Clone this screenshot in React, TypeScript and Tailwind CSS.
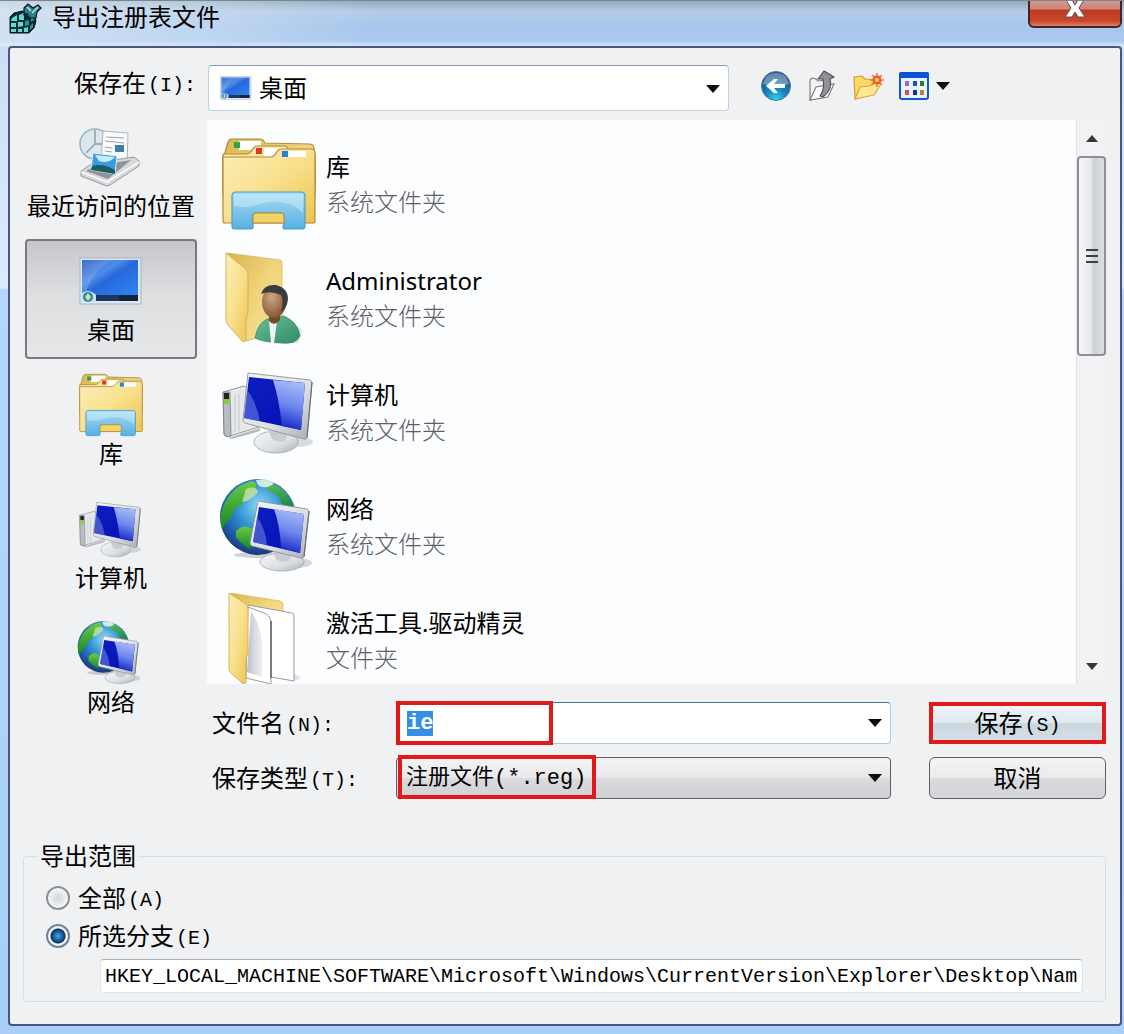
import { useEffect, useRef, useState, type ReactNode } from "react";

const CJK = "font-['Noto_Sans','Noto_Sans_CJK_SC',sans-serif]";
const MONO = "font-['Liberation_Mono','Noto_Sans_CJK_SC',monospace]";

/* Gradients shared by all the icons */
function Gradients() {
  return (
    <svg className="absolute size-0" aria-hidden="true">
      <defs>
        <linearGradient id="g-manila" x1="0" y1="0" x2="1" y2="1">
          <stop offset="0" stopColor="#fbeeb8" />
          <stop offset="0.5" stopColor="#f8e08c" />
          <stop offset="1" stopColor="#ecc44f" />
        </linearGradient>
        <linearGradient id="g-manila-back" x1="0" y1="0" x2="1" y2="1">
          <stop offset="0" stopColor="#d9b44c" />
          <stop offset="0.5" stopColor="#f0d47c" />
          <stop offset="1" stopColor="#f7e39c" />
        </linearGradient>
        <linearGradient id="g-stand" x1="0" y1="0" x2="0" y2="1">
          <stop offset="0" stopColor="#a5def4" />
          <stop offset="0.55" stopColor="#7cc3ea" />
          <stop offset="1" stopColor="#55b0e6" />
        </linearGradient>
        <linearGradient id="g-screen" x1="0" y1="0" x2="1" y2="1">
          <stop offset="0" stopColor="#0d1fc0" />
          <stop offset="1" stopColor="#0410b4" />
        </linearGradient>
        <linearGradient id="g-glare" x1="0.6" y1="0" x2="0.4" y2="1">
          <stop offset="0" stopColor="#a9bdf8" />
          <stop offset="0.5" stopColor="#6d87ec" />
          <stop offset="1" stopColor="#1222c4" />
        </linearGradient>
        <linearGradient id="g-metal" x1="0" y1="0" x2="1" y2="1">
          <stop offset="0" stopColor="#f6f7f9" />
          <stop offset="0.6" stopColor="#dcdfe2" />
          <stop offset="1" stopColor="#a9adb4" />
        </linearGradient>
        <linearGradient id="g-desk" x1="0" y1="0" x2="1" y2="1">
          <stop offset="0" stopColor="#1f57c4" />
          <stop offset="0.35" stopColor="#4f8ee8" />
          <stop offset="0.5" stopColor="#2768dc" />
          <stop offset="1" stopColor="#2f86f2" />
        </linearGradient>
        <radialGradient id="g-globe" cx="0.52" cy="0.35" r="0.65">
          <stop offset="0" stopColor="#8fdcf4" />
          <stop offset="0.45" stopColor="#3292d4" />
          <stop offset="1" stopColor="#16387f" />
        </radialGradient>
        <linearGradient id="g-land" x1="0" y1="0" x2="0" y2="1">
          <stop offset="0" stopColor="#6cc84a" />
          <stop offset="1" stopColor="#138a22" />
        </linearGradient>
        <radialGradient id="g-face" cx="0.4" cy="0.35" r="0.7">
          <stop offset="0" stopColor="#cfa683" />
          <stop offset="1" stopColor="#80522f" />
        </radialGradient>
        <linearGradient id="g-shirt" x1="0" y1="0" x2="1" y2="1">
          <stop offset="0" stopColor="#6dbd9a" />
          <stop offset="1" stopColor="#2f8d66" />
        </linearGradient>
        <linearGradient id="g-page" x1="0" y1="0" x2="1" y2="0">
          <stop offset="0" stopColor="#b9bcc4" />
          <stop offset="0.5" stopColor="#d9dce2" />
          <stop offset="1" stopColor="#eceef2" />
        </linearGradient>
        <radialGradient id="g-back" cx="0.5" cy="0.95" r="0.8">
          <stop offset="0" stopColor="#2ed3f0" />
          <stop offset="0.45" stopColor="#1a86bf" />
          <stop offset="1" stopColor="#1b4f88" />
        </radialGradient>
      </defs>
    </svg>
  );
}

function LibraryIcon({ className }: { className: string }) {
  return (
    <svg viewBox="0 0 94 94" className={className} aria-hidden="true">
      <g stroke="#b08a3c" strokeWidth="1.2" strokeLinejoin="round">
        <path d="M1 22 L6 5 Q7 2 10 2 H38 Q41 2 43 6 L88 7 Q91 7 92 11 L93 24 V60 H1Z" fill="url(#g-manila-back)" />
        <rect x="17" y="4" width="22" height="9" fill="#fff" stroke="none" />
        <path d="M1 17 H24 Q28 17 30 13 Q32 9 36 9 H64 L68 14 L93 17 V50 H1Z" fill="url(#g-manila)" />
        <rect x="42" y="11" width="22" height="9" fill="#fff" stroke="none" />
        <path d="M1 20 H48 Q52 20 54 16 Q56 12 60 12 H89 Q93 12 93 16 V84 Q93 86 91 86 H3 Q1 86 1 84Z" fill="url(#g-manila)" />
      </g>
      <rect x="12" y="5" width="6" height="6" fill="#2fa548" />
      <rect x="34" y="11" width="6" height="6" fill="#d93a20" />
      <rect x="66" y="14" width="18" height="6" fill="#fff" />
      <rect x="60" y="14" width="6" height="6" fill="#2184d0" />
      <path d="M10 59 Q10 55 14 55 H79 Q83 55 83 59 V89 Q83 92 80 92 H62 Q60 90 62 87 V79 Q62 76 59 76 H34 Q31 76 31 79 V90 Q31 92 28 92 H13 Q10 92 10 89Z" fill="url(#g-stand)" stroke="#4d9ecb" strokeWidth="1.2" />
      <path d="M12 57 H81 V76 Q64 60 38 67 Q22 72 12 69Z" fill="#fff" opacity="0.3" />
      <path d="M31 86 V79 Q31 76 34 76 H59 Q62 76 62 79 V86Z" fill="#f3d368" stroke="#b48b32" strokeWidth="1" />
    </svg>
  );
}

function UserFolderIcon({ className }: { className: string }) {
  return (
    <svg viewBox="0 0 94 94" className={className} aria-hidden="true">
      <path d="M66 72 Q82 76 80 82 L76 92 H50Z" fill="#9aa0a8" opacity="0.25" />
      <path d="M5 2 L58 9 Q60 9 60 12 V80 L24 90Z" fill="url(#g-manila-back)" stroke="#dcb95c" strokeWidth="0.8" />
      <path d="M4 2 L24 18 Q26 20 26 24 V62 Q24 66 24 70 V88 Q24 92 20 90 L6 74 Q4 72 4 68Z" fill="url(#g-manila)" stroke="#d4ae4e" strokeWidth="0.9" />
      <path d="M33 87 Q36 70 48 67 L62 65 Q76 71 78 85 Q74 94 58 92 Q40 91 33 87Z" fill="url(#g-shirt)" stroke="#2b7d5c" strokeWidth="0.6" />
      <path d="M47 70 L49 92 H52 L55 70Z" fill="#eef6f2" />
      <path d="M47 60 H58 V69 Q52 76 47 70Z" fill="#76492a" />
      <ellipse cx="52" cy="51" rx="12" ry="16" fill="url(#g-face)" />
      <path d="M39 43 Q42 33 54 34 Q66 37 66 48 Q65 58 59 61 Q62 50 59 44 Q48 39 39 43Z" fill="#3b3b3d" />
    </svg>
  );
}

function ComputerIcon({ className }: { className: string }) {
  return (
    <svg viewBox="0 0 94 94" className={className} aria-hidden="true">
      <ellipse cx="76" cy="77" rx="15" ry="5" fill="#8b8f96" opacity="0.3" />
      <path d="M1 27 L22 21 L36 30 L37 62 L8 71 Q2 73 2 68Z" fill="#e6e8ea" stroke="#8b8f95" strokeWidth="0.9" />
      <path d="M1 27 L8 27 L9 71 Q2 73 2 68Z" fill="#b9bcc0" stroke="#6e7277" strokeWidth="0.7" />
      <path d="M13 30 V67 M17 29 V66" stroke="#c4c7cb" strokeWidth="1" />
      <rect x="2" y="28" width="5" height="6" fill="#1c2220" />
      <rect x="2" y="34" width="5" height="5" fill="#7fd13a" />
      <path d="M6 73 L38 63 V66 L10 74Z" fill="#b7babf" />
      <ellipse cx="54" cy="77" rx="22" ry="11" fill="url(#g-metal)" stroke="#a1a5ab" strokeWidth="0.8" />
      <path d="M46 65 L66 69 L63 76 Q55 78 50 74Z" fill="#c9ccd1" />
      <path d="M26 8 L88 15 Q90 16 90 18 L85 72 Q84 75 82 74 L23 58 Q21 57 21 55Z" fill="url(#g-metal)" stroke="#8d9299" strokeWidth="0.9" />
      <path d="M27 12 L83 18 L79 65 L22 53Z" fill="url(#g-screen)" />
      <path d="M51 15 L83 18 L79 65 L60 61 Q57 34 51 15Z" fill="url(#g-glare)" />
      <path d="M25 25 Q34 36 38 56 L22 53Z" fill="#5a6fdc" opacity="0.7" />
      <path d="M90 17 L85 73" stroke="#6c7077" strokeWidth="1.2" />
    </svg>
  );
}

function NetworkIcon({ className }: { className: string }) {
  return (
    <svg viewBox="0 0 94 94" className={className} overflow="visible" aria-hidden="true">
      <ellipse cx="36" cy="76" rx="24" ry="3" fill="#7b8087" opacity="0.35" />
      <circle cx="36" cy="38" r="38" fill="url(#g-globe)" />
      <g fill="url(#g-land)">
        <path d="M3 24 Q12 6 30 2 Q38 5 31 12 L22 18 Q24 25 14 29 Q10 36 6 42 Q2 46 0 50 Q-4 36 3 24Z" />
        <path d="M14 52 Q22 44 30 50 Q32 60 28 70 Q20 66 14 58Z" />
        <path d="M38 1 Q52 2 62 12 Q70 20 71 28 L60 25 Q58 17 50 14 Q42 10 38 1Z" opacity="0.8" />
      </g>
      <path d="M24 10 Q34 6 36 13 Q28 22 20 23Z" fill="#d8eaa4" opacity="0.7" />
      <path d="M34 1 Q45 -1 52 4 Q48 9 40 8 Q35 7 34 1Z" fill="#eefaff" opacity="0.8" />
      <ellipse cx="75" cy="84" rx="15" ry="5" fill="#8b8f96" opacity="0.35" />
      <ellipse cx="60" cy="83" rx="22" ry="9" fill="url(#g-metal)" stroke="#a1a5ab" strokeWidth="0.8" />
      <path d="M50 70 L70 75 L67 82 Q58 84 54 80Z" fill="#c9ccd1" />
      <path d="M36 22 L85 30 Q87 31 87 33 L82 77 Q81 80 79 79 L30 67 Q28 66 28 64Z" fill="url(#g-metal)" stroke="#8d9299" strokeWidth="0.9" />
      <path d="M37 28 L82 35 L78 74 L31 63Z" fill="url(#g-screen)" />
      <path d="M52 30 L82 35 L78 74 L59 69 Q58 46 52 30Z" fill="url(#g-glare)" />
      <path d="M35 38 Q43 48 45 66 L31 63Z" fill="#5a6fdc" opacity="0.7" />
      <path d="M87 32 L82 78" stroke="#6c7077" strokeWidth="1.2" />
    </svg>
  );
}

function DocumentsFolderIcon({ className }: { className: string }) {
  return (
    <svg viewBox="0 0 94 94" className={className} aria-hidden="true">
      <path d="M72 80 L79 85 L72 88Z" fill="#9aa0a8" opacity="0.3" />
      <path d="M8 0 L58 8 Q61 9 61 12 V30 L26 30Z" fill="url(#g-manila-back)" stroke="#dcb95c" strokeWidth="0.8" />
      <path d="M26 12 L70 20 Q72 20 72 23 V88 L49 84 L26 70Z" fill="#fff" stroke="#8f9097" strokeWidth="0.9" />
      <path d="M26 14 L42 20 Q49 23 49 30 V91 L24 85Z" fill="#fff" stroke="#8f9097" strokeWidth="0.9" />
      <path d="M29 18 Q40 34 40 52 V84 L25 79Z" fill="url(#g-page)" />
      <path d="M49 28 V85" stroke="#6d6470" strokeWidth="1.6" />
      <path d="M7 0 L24 11 Q26 13 26 16 V60 Q24 64 24 68 V88 Q24 92 20 90 L9 80 Q7 78 7 75Z" fill="url(#g-manila)" stroke="#d4ae4e" strokeWidth="0.9" />
    </svg>
  );
}

function DesktopIcon({ className }: { className: string }) {
  return (
    <svg viewBox="0 0 64 48" className={className} aria-hidden="true">
      <rect x="1" y="1" width="61" height="46" fill="#dfe9f5" stroke="#a7b3c4" strokeWidth="1" />
      <rect x="3" y="3" width="56" height="36" fill="url(#g-desk)" />
      <path d="M3 3 H34 Q12 14 6 39 H3Z" fill="#fff" opacity="0.14" />
      <rect x="3" y="38" width="56" height="6" fill="#1d3763" />
      <rect x="40" y="38" width="19" height="6" fill="#16243d" />
      <path d="M3 36 Q10 31 17 38 V45 H3Z" fill="#c9e0ee" />
      <circle cx="9" cy="40" r="5" fill="#2d84a8" />
      <path d="M9 36 L12 40 L9 44 L6 40Z" fill="#cfe6a0" />
    </svg>
  );
}

function DesktopPlaceIcon({ className }: { className: string }) {
  return (
    <span className={`flex items-center justify-center ${className}`}>
      <DesktopIcon className="w-full" />
    </span>
  );
}

function RecentIcon({ className }: { className: string }) {
  return (
    <svg viewBox="0 0 64 64" className={className} aria-hidden="true">
      <circle cx="16" cy="19" r="15" fill="#dde7ee" stroke="#a3b2bd" strokeWidth="1.6" />
      <path d="M16 5 V19 L7 28 M16 19 H28" stroke="#8598a6" strokeWidth="1.3" fill="none" />
      <path d="M24 6 L49 8 L48 42 L22 38Z" fill="#f9fafb" stroke="#a8adb3" strokeWidth="0.9" />
      <path d="M27 12 L45 13 M26 16 L45 18 M26 22 L33 23 M26 26 L33 27" stroke="#98a4ad" strokeWidth="1.2" />
      <rect x="36" y="20" width="9" height="7" fill="#3e7fa8" />
      <path d="M2 46 L14 38 L55 32 L60 36 V41 L31 60 Q28 62 25 60 L2 51Z" fill="#d6d8da" stroke="#8d9194" strokeWidth="0.9" />
      <path d="M7 46 L16 41 L52 35 L29 54Z" fill="#8e9498" />
      <path d="M2 47 L28 57 L60 37" stroke="#fafafa" strokeWidth="1.6" fill="none" />
      <path d="M14 28 L38 31 L36 49 L12 45Z" fill="#3b9be0" stroke="#e9f4fb" strokeWidth="0.9" />
      <path d="M16 30 L36 32 Q30 39 20 36Z" fill="#c9ecfb" />
      <path d="M13 41 Q24 38 36 45 L36 49 L12 45Z" fill="#185f63" />
    </svg>
  );
}

function RegistryIcon() {
  return (
    <svg viewBox="0 0 34 34" className="size-[34px]" aria-hidden="true">
      <path d="M2 16 L6 12 L14 10 L26 13 L28 20 L26 27 L21 32 L2 32Z" fill="#0b2e33" stroke="#06181b" strokeWidth="1" />
      <path d="M4 17 L9 14 V20 H3Z M11 14 L16 12 V19 H11Z M3 22 H8 V26 H3Z M10 21 H15 V25 L10 26Z M3 28 H8 V31 H3Z M10 28 H14 V31 H10Z M16 27 L20 26 V31 H16Z" fill="#62dbd6" />
      <path d="M17 20 L21 19 V24 L17 25Z M22 25 L25 22 V26 L22 29Z M23 17 L26 16 V19 L23 21Z" fill="#259596" />
      <path d="M16 7 L20 3 L25 7 L30 4 L33 7 L29 11 L28 17 L22 17 L16 12Z" fill="#2c7f88" stroke="#06181b" strokeWidth="1.2" />
      <path d="M19 6 L23 10 M30 6 L24 12" stroke="#a9e8e6" strokeWidth="1.6" />
      <path d="M15 13 L20 12 L21 17 L17 18Z" fill="#08262a" />
    </svg>
  );
}

function BackIcon() {
  return (
    <svg viewBox="0 0 32 32" className="size-8" aria-hidden="true">
      <circle cx="16" cy="16" r="14.5" fill="url(#g-back)" stroke="#4d7ca6" strokeWidth="1" />
      <path d="M3 14 Q5 3 16 3 Q27 3 29 14 Q16 18 3 14Z" fill="#fff" opacity="0.35" />
      <path d="M6 16 L14 9 H18 L14 14 H25 V18 H14 L18 23 H14Z" fill="#fff" />
    </svg>
  );
}

function UpIcon() {
  return (
    <svg viewBox="0 0 32 32" className="size-8" aria-hidden="true">
      <path d="M4 10 L6 8 L10 9 L12 11 L20 10 V26 L4 30Z" fill="#f2f2f2" stroke="#77797c" strokeWidth="1.1" />
      <path d="M4 30 L10 17 L28 14 L22 27Z" fill="#fdfdfd" stroke="#77797c" strokeWidth="1.1" />
      <path d="M12 9 L18 1 L28 7 L24 9 Q27 20 17 27 L14 26 Q19 19 17 9Z" fill="#8f9195" stroke="#4c4e52" strokeWidth="1.1" strokeLinejoin="round" />
    </svg>
  );
}

function NewFolderIcon() {
  return (
    <svg viewBox="0 0 32 32" className="size-8" aria-hidden="true">
      <path d="M2 7 L10 6 L13 9 L24 10 V22 L3 29Z" fill="#f9d968" stroke="#d39a2c" strokeWidth="1.1" />
      <path d="M3 29 L8 17 L18 16 L22 12 L29 14 L22 25Z" fill="#fde98f" stroke="#dba337" strokeWidth="1.1" strokeLinejoin="round" />
      <circle cx="25" cy="10" r="3.5" fill="#ffc37a" stroke="#ee5a1c" strokeWidth="2.4" />
      <path d="M25 3 V5 M25 15 V17 M18 10 H20 M30 10 H32 M20 5 L22 7 M30 5 L28 7 M20 15 L22 13 M30 15 L28 13" stroke="#f27a3a" strokeWidth="1.6" />
    </svg>
  );
}

function ViewsIcon() {
  return (
    <svg viewBox="0 0 32 32" className="size-8" aria-hidden="true">
      <rect x="2" y="3" width="28" height="26" rx="2" fill="#e6f5fd" stroke="#1458cc" strokeWidth="2" />
      <rect x="1" y="2" width="30" height="6" rx="2" fill="#0b52d4" />
      <rect x="7" y="11" width="4" height="5" fill="#a06ab8" />
      <rect x="15" y="11" width="4" height="5" fill="#1f51b4" />
      <rect x="22" y="11" width="4" height="5" fill="#2b7a2e" />
      <rect x="7" y="20" width="4" height="5" fill="#d0524a" />
      <rect x="15" y="20" width="4" height="5" fill="#1c2f8e" />
      <rect x="22" y="20" width="4" height="5" fill="#c5822e" />
    </svg>
  );
}

function Caret({ className = "" }: { className?: string }) {
  return (
    <svg viewBox="0 0 14 8" className={`h-2 w-3.5 ${className}`} aria-hidden="true">
      <path d="M0 0 H14 L7 8Z" fill="#0c0c0c" />
    </svg>
  );
}

function ScrollArrow({ className = "" }: { className?: string }) {
  return (
    <svg viewBox="0 0 12 7" className={`h-[7px] w-3 ${className}`} aria-hidden="true">
      <path d="M0 0 H12 L6 7Z" fill="#3a3536" />
    </svg>
  );
}

function Key({ children }: { children: ReactNode }) {
  return <span className="ml-0.5 align-[1px] font-['Liberation_Mono',monospace] text-[20px]">{children}</span>;
}

const places = [
  { name: "最近访问的位置", Icon: RecentIcon },
  { name: "桌面", Icon: DesktopPlaceIcon },
  { name: "库", Icon: LibraryIcon },
  { name: "计算机", Icon: ComputerIcon },
  { name: "网络", Icon: NetworkIcon },
];

const files = [
  { name: "库", kind: "系统文件夹", Icon: LibraryIcon },
  { name: "Administrator", kind: "系统文件夹", Icon: UserFolderIcon },
  { name: "计算机", kind: "系统文件夹", Icon: ComputerIcon },
  { name: "网络", kind: "系统文件夹", Icon: NetworkIcon },
  { name: "激活工具.驱动精灵", kind: "文件夹", Icon: DocumentsFolderIcon },
];

export default function App() {
  const [place, setPlace] = useState("桌面");
  const [range, setRange] = useState("branch");
  const nameRef = useRef<HTMLInputElement>(null);

  useEffect(() => {
    nameRef.current?.focus();
    nameRef.current?.select();
  }, []);

  return (
    <div
      className={`${CJK} flex min-h-screen flex-col bg-[linear-gradient(to_bottom,#c9dcf2_0,#dcebfb_288px,#b4d6fb_290px,#a9cff8_100%)] pr-0.5 pb-2 pl-2 text-[24px] text-black`}
    >
      <Gradients />
      <header className="-mr-0.5 -ml-2 flex h-[46px] items-start border-t border-[#76888f] bg-[linear-gradient(to_right,rgba(226,236,246,0.7)_0,rgba(210,226,244,0.55)_200px,rgba(170,200,236,0)_380px),linear-gradient(to_bottom,#91a8b6_0,#b3cbe8_10px,#a6c6ec_60%,#a9c9ef_88%,#d5e6f8_100%)] pr-0.5 pl-2">
        <RegistryIcon />
        <h1 className="ml-2.5 leading-8">导出注册表文件</h1>
        <button
          type="button"
          aria-label="关闭"
          className="ml-auto flex h-[27px] w-[94px] items-start justify-center rounded-b-md border-2 border-t-0 border-[#40242c] bg-[linear-gradient(to_bottom,#d5988c_0,#cf8577_8px,#bd3a22_9px,#c9472b_20px,#dd8168_100%)]"
        >
          <svg viewBox="0 0 24 18" className="h-[18px] w-6" aria-hidden="true">
            <path d="M3 -1 H9 L12 4 L15 -1 H21 L16 7 L22 16 H15 L12 11 L9 16 H2 L8 7Z" fill="#fff" stroke="#5f4a54" strokeWidth="1" />
          </svg>
        </button>
      </header>

      <main className="flex-1 rounded-sm border-2 border-[#4b567e] bg-[#f0f1f3] pt-[17px] pr-3.5 pb-5 pl-[13px]">
        <div className="flex items-start pl-0.5">
          <label htmlFor="place" className="w-[183px] pl-[49px] leading-9 whitespace-nowrap">
            保存在<Key>(I):</Key>
          </label>
          <div className="relative w-[521px]">
            <select
              id="place"
              className="h-[46px] w-full appearance-none rounded-sm border border-[#c3cfdc] border-t-[#8d9cb0] bg-white pl-[50px]"
            >
              <option>桌面</option>
            </select>
            <DesktopIcon className="pointer-events-none absolute top-[11px] left-3 h-6 w-8" />
            <Caret className="pointer-events-none absolute top-5 right-[9px]" />
          </div>
          <div className="ml-[31px] flex items-center gap-3.5 pt-[5px]">
            <button type="button" aria-label="后退"><BackIcon /></button>
            <button type="button" aria-label="向上一级"><UpIcon /></button>
            <button type="button" aria-label="新建文件夹"><NewFolderIcon /></button>
            <button type="button" aria-label="查看" className="flex items-center gap-1.5">
              <ViewsIcon />
              <Caret />
            </button>
          </div>
        </div>

        <div className="mt-1 flex gap-2.5 pl-0.5">
          <nav className="flex w-[172px] shrink-0 flex-col gap-1">
            {places.map(({ name, Icon }) => (
              <button
                key={name}
                type="button"
                aria-pressed={place === name}
                onClick={() => setPlace(name)}
                className={`flex h-[120px] flex-col items-center rounded-sm border-2 pt-2 ${
                  place === name
                    ? "border-[#77797d] bg-[linear-gradient(to_bottom,#c6c7ca_0,#dddee0_45%,#e6e7e9_100%)]"
                    : "border-transparent"
                }`}
              >
                <Icon className="size-16" />
                <span className="leading-[34px] whitespace-nowrap">{name}</span>
              </button>
            ))}
          </nav>

          <div className="flex-1 pt-[5px]">
            <div className="flex h-[564px] bg-[#fcfdff]">
              <ul className="flex-1 overflow-hidden pt-[7px] pl-[15px]">
                {files.map(({ name, kind, Icon }) => (
                  <li key={name} className="flex h-[114px] items-center gap-2.5">
                    <Icon className="size-[94px]" />
                    <div className="leading-[35px]">
                      <p>{name}</p>
                      <p className="font-light text-[#605c6a]">{kind}</p>
                    </div>
                  </li>
                ))}
              </ul>
              <div className="flex w-[30px] flex-col items-stretch border-l border-[#e3e5e8] bg-[#f1f2f4]">
                <button type="button" aria-label="向上滚动" className="flex h-9 items-center justify-center">
                  <ScrollArrow className="rotate-180" />
                </button>
                <div className="flex h-[200px] flex-col items-center justify-center gap-1 rounded-sm border-2 border-[#8e8f96] bg-[linear-gradient(to_right,#f7f7f9_0,#e9eaed_45%,#cdd0d6_60%,#dddfe4_100%)]">
                  <span className="h-0.5 w-3 bg-[#3c3d48]" />
                  <span className="h-0.5 w-3 bg-[#3c3d48]" />
                  <span className="h-0.5 w-3 bg-[#3c3d48]" />
                </div>
                <button type="button" aria-label="向下滚动" className="mt-auto flex h-9 items-center justify-center">
                  <ScrollArrow />
                </button>
              </div>
            </div>

            <div className="mt-[18px] flex">
              <div className="flex flex-1 flex-col gap-[13px]">
                <div className="flex items-center">
                  <label htmlFor="file-name" className="w-[189px] pl-[5px]">
                    文件名<Key>(N):</Key>
                  </label>
                  <div className="relative flex-1">
                    <input
                      id="file-name"
                      ref={nameRef}
                      defaultValue="ie"
                      className={`${MONO} block h-[42px] w-full rounded-sm border border-[#a9cbe6] border-t-[#4179a8] bg-white px-2.5 text-[22px] font-bold outline-none selection:bg-[#3390e6] selection:text-white`}
                    />
                    <Caret className="pointer-events-none absolute top-[17px] right-[9px]" />
                    <span className="pointer-events-none absolute -top-px left-0 h-11 w-[157px] border-4 border-[#e01a1a]" />
                  </div>
                </div>
                <div className="flex items-center">
                  <label htmlFor="file-type" className="w-[189px] pl-[5px]">
                    保存类型<Key>(T):</Key>
                  </label>
                  <div className="relative flex-1">
                    <select
                      id="file-type"
                      className={`${MONO} block h-[42px] w-full appearance-none rounded-sm border border-[#5f6064] bg-[linear-gradient(to_bottom,#f3f3f4_0,#e9e9eb_48%,#dadbdd_52%,#cfd0d3_100%)] pl-[9px] text-[22px]`}
                    >
                      <option>注册文件(*.reg)</option>
                    </select>
                    <Caret className="pointer-events-none absolute top-[17px] right-[9px]" />
                    <span className="pointer-events-none absolute -top-0.5 left-0.5 h-11 w-[198px] border-4 border-[#e01a1a]" />
                  </div>
                </div>
              </div>
              <div className="ml-[38px] flex w-[177px] flex-col gap-[13px]">
                <button
                  type="submit"
                  className="flex h-[42px] items-center justify-center border-4 border-[#e01a1a] bg-[linear-gradient(to_bottom,#eef4f8_0,#e0e9ef_48%,#cbd6de_52%,#d3dee6_100%)]"
                >
                  <span>
                    保存<Key>(S)</Key>
                  </span>
                </button>
                <button
                  type="button"
                  className="flex h-[42px] items-center justify-center rounded-md border border-[#5f6064] bg-[linear-gradient(to_bottom,#f4f4f5_0,#ebebed_48%,#d9dadc_52%,#d4d5d8_100%)]"
                >
                  取消
                </button>
              </div>
            </div>
          </div>
        </div>

        <fieldset className="mt-[41px] rounded-sm border border-[#d6dde3] px-[22px] pb-2">
          <legend className="-ml-2 px-0.5 leading-8">导出范围</legend>
          <div className="pt-[7px]">
            {[
              { id: "all", text: "全部", key: "(A)" },
              { id: "branch", text: "所选分支", key: "(E)" },
            ].map((o) => (
              <div key={o.id} className="flex h-[38px] items-center">
                <input
                  id={o.id}
                  type="radio"
                  name="range"
                  checked={range === o.id}
                  onChange={() => setRange(o.id)}
                  className="size-6 appearance-none rounded-full border-2 border-[#8b9097] bg-[radial-gradient(circle,#d5d8db_0,#eceef0_55%,#fafafa_70%)] checked:border-[#6f8598] checked:bg-[radial-gradient(circle_at_50%_50%,#3fa6e4_0,#125a96_5px,#0d2f55_7px,#f4f6f8_8px)]"
                />
                <label htmlFor={o.id} className="pl-2">
                  {o.text}
                  <Key>{o.key}</Key>
                </label>
              </div>
            ))}
            <div className="mt-1 pl-[54px]">
              <input
                aria-label="所选分支"
                defaultValue="HKEY_LOCAL_MACHINE\SOFTWARE\Microsoft\Windows\CurrentVersion\Explorer\Desktop\Nam"
                className={`${MONO} block h-[34px] w-full rounded-sm border border-[#dde3e8] border-t-[#abb0b6] bg-white px-1 text-[20px]`}
              />
            </div>
          </div>
        </fieldset>
      </main>
    </div>
  );
}
